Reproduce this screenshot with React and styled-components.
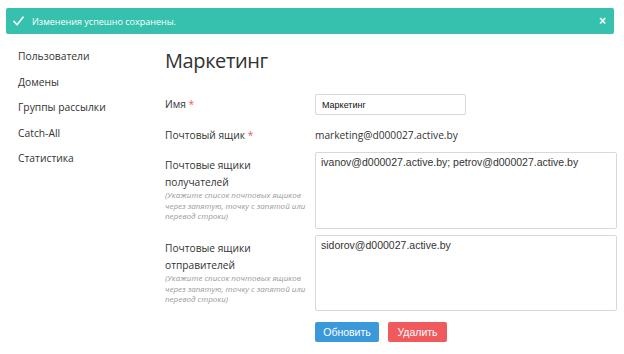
import React from 'react'
import styled, { createGlobalStyle } from 'styled-components'

const GlobalStyle = createGlobalStyle`
  body {
    margin: 0;
    background: #fff;
    font-family: "Open Sans", "Liberation Sans", sans-serif;
    color: #333;
  }
`

const Page = styled.div`
  padding: 8px 10px 0 6px;
`

const Alert = styled.div`
  height: 26px;
  display: flex;
  align-items: center;
  padding: 0 8px 0 7px;
  background: #35c1ae;
  border-radius: 2px;
  color: #fff;
  font-size: 9px;
`

const AlertText = styled.span`
  flex: 1;
  margin-left: 8px;
`

const CloseBtn = styled.span`
  font-family: "Liberation Sans", sans-serif;
  font-size: 12px;
  font-weight: bold;
  line-height: 1;
`

const Main = styled.div`
  display: flex;
`

const Sidebar = styled.ul`
  list-style: none;
  margin: 0;
  padding: 14px 0 0 12px;
  width: 147px;
  flex-shrink: 0;
`

const NavItem = styled.li`
  font-size: 10.3px;
  line-height: 17px;
  margin-bottom: 8.6px;
  color: #333;
`

const Content = styled.div`
  padding-top: 14px;
  flex-shrink: 0;
`

const Title = styled.h1`
  margin: 0 0 21px;
  font-size: 20px;
  font-weight: 400;
  letter-spacing: -0.4px;
  line-height: 25px;
  color: #333;
`

const Row = styled.div`
  display: grid;
  grid-template-columns: 150px auto;
  margin-bottom: ${p => p.gap || 0}px;
`

const Label = styled.div`
  font-size: 10.2px;
  line-height: ${p => p.lh || 16.5}px;
  padding-top: ${p => p.pt || 0}px;
`

const Req = styled.span`
  color: #f05a5a;
`

const Hint = styled.div`
  margin-top: 0;
  font-size: 8px;
  line-height: 10.5px;
  font-style: italic;
  color: #999;
  width: 148px;
`

const Input = styled.input`
  box-sizing: border-box;
  width: 151px;
  height: 21px;
  border: 1px solid #d8d8d8;
  border-radius: 2px;
  padding: 0 6px;
  font-family: "Liberation Sans", Arial, sans-serif;
  font-size: 9px;
  color: #111;
  outline: none;
`

const Value = styled.div`
  font-size: 10.2px;
  line-height: 17px;
`

const TextArea = styled.textarea`
  box-sizing: border-box;
  width: 302px;
  height: ${p => p.h}px;
  border: 1px solid #d8d8d8;
  border-radius: 2px;
  padding: 3px 5px;
  resize: none;
  font-family: "Liberation Sans", Arial, sans-serif;
  font-size: 10.5px;
  line-height: 13px;
  color: #333;
  outline: none;
  overflow: hidden;
`

const Buttons = styled.div`
  display: flex;
  gap: 9px;
  margin-left: 150px;
`

const Button = styled.button`
  width: ${p => p.w}px;
  height: 20px;
  padding: 0;
  border: none;
  border-radius: 2px;
  background: ${p => p.bg};
  color: #fff;
  font-family: "Liberation Sans", Arial, sans-serif;
  font-size: 10.5px;
  line-height: 20px;
  cursor: pointer;
`

const Check = () => (
  <svg width="11" height="10" viewBox="0 0 11 10">
    <path d="M1 5.5 L4 8.8 L10 1.2" fill="none" stroke="#fff" strokeWidth="1.7" strokeLinecap="round" strokeLinejoin="round" />
  </svg>
)

export default function App() {
  const navItems = ['Пользователи', 'Домены', 'Группы рассылки', 'Catch-All', 'Статистика']

  return (
    <Page>
      <GlobalStyle />
      <Alert>
        <Check />
        <AlertText>Изменения успешно сохранены.</AlertText>
        <CloseBtn>×</CloseBtn>
      </Alert>
      <Main>
        <Sidebar>
          {navItems.map(item => <NavItem key={item}>{item}</NavItem>)}
        </Sidebar>
        <Content>
          <Title>Маркетинг</Title>
          <Row gap={12}>
            <Label lh={21}>Имя <Req>*</Req></Label>
            <Input defaultValue="Маркетинг" />
          </Row>
          <Row gap={8}>
            <Label lh={17}>Почтовый ящик <Req>*</Req></Label>
            <Value>marketing@d000027.active.by</Value>
          </Row>
          <Row gap={6}>
            <Label pt={5}>
              Почтовые ящики<br />получателей
              <Hint>(Укажите список почтовых ящиков через запятую, точку с запятой или перевод строки)</Hint>
            </Label>
            <TextArea h={77} defaultValue="ivanov@d000027.active.by; petrov@d000027.active.by" />
          </Row>
          <Row gap={11}>
            <Label pt={5}>
              Почтовые ящики<br />отправителей
              <Hint>(Укажите список почтовых ящиков через запятую, точку с запятой или перевод строки)</Hint>
            </Label>
            <TextArea h={76} defaultValue="sidorov@d000027.active.by" />
          </Row>
          <Buttons>
            <Button bg="#3a99db" w={64}>Обновить</Button>
            <Button bg="#f15a5c" w={59}>Удалить</Button>
          </Buttons>
        </Content>
      </Main>
    </Page>
  )
}
